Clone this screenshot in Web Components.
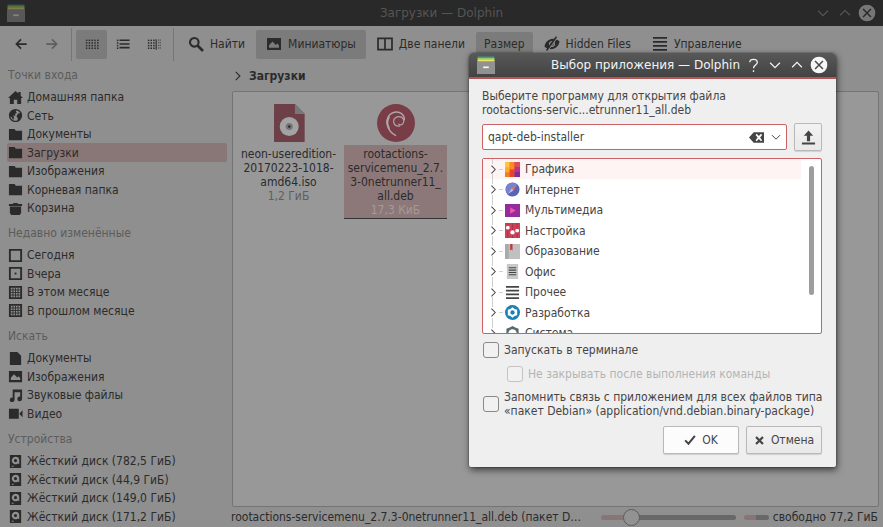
<!DOCTYPE html>
<html lang="ru">
<head>
<meta charset="utf-8">
<title>Загрузки — Dolphin</title>
<style>
html,body{margin:0;height:100%;overflow:hidden}
body{font:12px/14px "DejaVu Sans Condensed","DejaVu Sans",sans-serif;color:#2b2b2b;background:#8f8f8f}
</style>
</head>
<body>
<file-manager></file-manager>

<template id="manager">
<style>
:host{display:grid;grid-template-rows:auto auto minmax(0,1fr);height:100%;position:relative;overflow:hidden}
.body{display:grid;grid-template-columns:232px minmax(0,1fr);min-height:0}
nav{display:flex;flex-direction:column;gap:7px;padding:4px 5px 0 7px;overflow:hidden}
main{display:flex;flex-direction:column;min-width:0;padding-right:4px}
.crumb{display:flex;align-items:center;gap:5px;height:27px;margin-bottom:2px;font-weight:bold}
.crumb a{color:inherit;text-decoration:none}
.view{flex:1;display:flex;align-items:flex-start;gap:4px;padding:12px 4px;border:1px solid #747474;border-radius:2px;background:#989898;min-height:0}
choose-dialog{position:absolute;right:47px;top:53px;width:367px}
</style>
<window-title heading="Загрузки — Dolphin"></window-title>
<tool-bar></tool-bar>
<div class="body">
<nav aria-label="Точки входа">
<place-group heading="Точки входа">
<place-item icon="home">Домашняя папка</place-item>
<place-item icon="globe">Сеть</place-item>
<place-item icon="folder">Документы</place-item>
<place-item icon="folder" current>Загрузки</place-item>
<place-item icon="folder">Изображения</place-item>
<place-item icon="folder">Корневая папка</place-item>
<place-item icon="trash">Корзина</place-item>
</place-group>
<place-group heading="Недавно изменённые">
<place-item icon="day">Сегодня</place-item>
<place-item icon="yesterday">Вчера</place-item>
<place-item icon="month">В этом месяце</place-item>
<place-item icon="month">В прошлом месяце</place-item>
</place-group>
<place-group heading="Искать">
<place-item icon="doc">Документы</place-item>
<place-item icon="image">Изображения</place-item>
<place-item icon="music">Звуковые файлы</place-item>
<place-item icon="video">Видео</place-item>
</place-group>
<place-group heading="Устройства">
<place-item icon="disk">Жёсткий диск (782,5 ГиБ)</place-item>
<place-item icon="disk">Жёсткий диск (44,9 ГиБ)</place-item>
<place-item icon="disk">Жёсткий диск (149,0 ГиБ)</place-item>
<place-item icon="disk">Жёсткий диск (171,2 ГиБ)</place-item>
</place-group>
</nav>
<main>
<div class="crumb"><ui-icon name="chevron" size="12"></ui-icon><a href="#downloads">Загрузки</a></div>
<div class="view">
<file-item icon="iso" size="1,2 ГиБ">neon-useredition-<br>20170223-1018-<br>amd64.iso</file-item>
<file-item icon="debian" size="17,3 КиБ" selected>rootactions-<br>servicemenu_2.7.<br>3-0netrunner11_<br>all.deb</file-item>
</div>
<status-line></status-line>
</main>
</div>
<choose-dialog></choose-dialog>
</template>

<template id="title">
<style>
:host{display:grid;grid-template-columns:1fr auto 1fr;align-items:center;height:26px;padding:0 7px;background:#292929;color:#555;font-family:"DejaVu Sans",sans-serif}
:host([dialog]){grid-template-columns:auto 1fr auto;column-gap:4px;height:24px;border-bottom:2px solid #b75456;padding:0 8px;background:linear-gradient(#585858,#434343);color:#f4f4f4;border-radius:4px 4px 0 0}
:host([dialog]) .t{text-align:right}
.app{display:flex;opacity:.45}
:host([dialog]) .app{opacity:1}
.c{display:flex;justify-content:flex-end;gap:4px}
button{all:unset;display:flex;width:18px;height:18px;align-items:center;justify-content:center}
.q{display:none}
:host([dialog]) .q{display:flex}
.x{color:#777;--hole:#292929}
:host([dialog]) .x{color:#f6f6f6;--hole:#484848}
</style>
<span class="app"><ui-icon name="cabinet" size="18"></ui-icon></span>
<span class="t"></span>
<span class="c">
<button class="q" aria-label="Справка"><ui-icon name="help" size="15"></ui-icon></button>
<button aria-label="Свернуть"><ui-icon name="down" size="12"></ui-icon></button>
<button aria-label="Развернуть"><ui-icon name="up" size="12"></ui-icon></button>
<button class="x" aria-label="Закрыть"><ui-icon name="close" size="18"></ui-icon></button>
</span>
</template>

<template id="toolbar">
<style>
:host{display:flex;align-items:center;height:36px;padding:0 5px;box-sizing:border-box}
i{width:1px;height:33px;margin:0 4px;background:#767676}
.off{color:#5e5e5e}
.words{display:flex;align-items:center;gap:1px}
</style>
<tool-button icon="back" label="Назад"></tool-button>
<tool-button icon="forward" label="Вперёд" class="off"></tool-button>
<i></i>
<tool-button icon="grid" label="Значки" pressed></tool-button>
<tool-button icon="list" label="Список"></tool-button>
<tool-button icon="columns" label="Столбцы"></tool-button>
<i></i>
<div class="words">
<tool-button icon="search">Найти</tool-button>
<tool-button icon="image" pressed>Миниатюры</tool-button>
<tool-button icon="split">Две панели</tool-button>
<tool-button pressed>Размер</tool-button>
<tool-button icon="eye">Hidden Files</tool-button>
<tool-button icon="menu">Управление</tool-button>
</div>
</template>

<template id="toolbutton">
<style>
:host{display:block;flex:none}
button{all:unset;box-sizing:border-box;display:flex;align-items:center;justify-content:center;gap:6px;height:29px;min-width:31px;padding:0 10px;border-radius:2px;white-space:nowrap}
button.bare{padding:0}
button.text{padding:0 8px;height:24px}
:host([pressed]) button{background:#7b7b7b}
</style>
<button><slot></slot></button>
</template>

<template id="group">
<style>
:host{display:block}
h2{margin:0 0 4px 1px;font-size:12px;line-height:18px;font-weight:normal;color:#5c5c5c}
</style>
<h2></h2><div><slot></slot></div>
</template>

<template id="place">
<style>
:host{display:block;height:18px}
:host(:nth-child(even)){height:19px}
a{display:flex;align-items:center;gap:4px;height:100%;padding-left:1px;border-radius:2px;color:inherit;text-decoration:none;white-space:nowrap}
:host([current]) a{background:#897777}
</style>
<a href="#place"><ui-icon size="15"></ui-icon><span><slot></slot></span></a>
</template>

<template id="file">
<style>
:host{display:flex;flex-direction:column;align-items:center;gap:3px;width:103px;text-align:center}
.n{align-self:stretch;padding:2px 0 1px;line-height:14px}
small{display:block;font-size:12px;color:#5f5f5f}
:host([selected]) .n{background:#8c7878;border-bottom:1px solid #333}
:host([selected]) small{color:#a69999}
</style>
<ui-icon size="38"></ui-icon><div class="n"><slot></slot><small></small></div>
</template>

<template id="status">
<style>
:host{display:flex;align-items:center;gap:8px;height:20px;margin:0 -4px 0 -1px;padding-right:5px;white-space:nowrap}
.s{flex:1;min-width:0}
input{appearance:none;flex:none;width:135px;height:18px;margin:0;background:none}
input::-webkit-slider-runnable-track{height:5px;border-radius:3px;background:linear-gradient(90deg,#897575 22%,#686868 22%)}
input::-webkit-slider-thumb{appearance:none;box-sizing:border-box;width:17px;height:17px;margin-top:-6px;border:1px solid #5c5c5c;border-radius:50%;background:#929292}
.u{flex:none;width:25px;height:5px;border-radius:3px;background:linear-gradient(90deg,#897575 50%,#686868 50%);margin-right:-4px}
</style>
<span class="s">rootactions-servicemenu_2.7.3-0netrunner11_all.deb (пакет D…</span>
<input type="range" min="0" max="100" value="19" aria-label="Размер значков">
<span class="u" role="img" aria-label="Занято на диске"></span>
<span>свободно 77,2 ГиБ</span>
</template>

<template id="dialog">
<style>
:host{display:block;border-radius:4px 4px 2px 2px;background:#efefef;color:#454545;box-shadow:1px 3px 7px #0009,0 0 2px #0008}
form{padding:10px 14px 13px 13px}
.ask{display:block;margin:0 0 6px;white-space:normal}
.row{display:flex;gap:7px;align-items:center}
.combo{flex:1;min-width:0;display:flex;align-items:center;box-sizing:border-box;height:26px;padding-left:5px;border:1px solid #cc6265;border-radius:2px;background:#fff}
input[type=text]{flex:1;min-width:0;border:0;outline:0;padding:0;background:none;color:inherit;font:inherit}
button{font:inherit;color:inherit}
.combo button{all:unset;display:flex;width:20px;justify-content:center}
.btn{display:flex;align-items:center;justify-content:center;gap:6px;box-sizing:border-box;width:76px;height:28px;padding:0;border:1px solid #b9b9b9;border-radius:2px;background:linear-gradient(#f2f2f2,#e9e9e9);box-shadow:0 1px 1px #0002}
.sq{width:28px}
.ok{background:#fcfcfc}
app-tree{margin:7px 0 8px}
.tick{display:flex;align-items:center;gap:5px;padding-left:1px;white-space:nowrap}
.sub{margin:8px 0 8px 24px;color:#b4b4b4}
input[type=checkbox]{appearance:none;box-sizing:border-box;flex:none;width:16px;height:16px;margin:0;border:1px solid #898989;border-radius:3px;background:#f1f1f1}
input:disabled{border-color:#c3c3c3}
.end{justify-content:flex-end;margin-top:8px}
</style>
<window-title dialog heading="Выбор приложения — Dolphin"></window-title>
<form onsubmit="return false">
<label class="ask" for="cmd">Выберите программу для открытия файла<br>rootactions-servic...etrunner11_all.deb</label>
<div class="row">
<div class="combo"><input id="cmd" type="text" value="qapt-deb-installer"><button type="button" aria-label="Очистить"><ui-icon name="clear" size="15"></ui-icon></button><button type="button" aria-label="Показать список"><ui-icon name="down" size="10"></ui-icon></button></div>
<button type="button" class="btn sq" aria-label="Обзор"><ui-icon name="upload" size="15"></ui-icon></button>
</div>
<app-tree></app-tree>
<label class="tick"><input type="checkbox">Запускать в терминале</label>
<label class="tick sub"><input type="checkbox" disabled>Не закрывать после выполнения команды</label>
<label class="tick"><input type="checkbox"><span>Запомнить связь с приложением для всех файлов типа<br>«пакет Debian» (application/vnd.debian.binary-package)</span></label>
<div class="row end"><button class="btn ok"><ui-icon name="check" size="12"></ui-icon>OK</button><button type="button" class="btn"><ui-icon name="cross" size="11"></ui-icon>Отмена</button></div>
</form>
</template>

<template id="tree">
<style>
:host{display:flex;height:174px;overflow:hidden;border:1px solid #cc6265;border-radius:2px;background:#fff}
ul{flex:1;margin:0;padding:0;list-style:none}
li{display:flex;align-items:center;height:20px;padding-left:5px}
li:nth-child(even){height:21px}
li:first-child{background:#fef4f3}
li>span{margin-left:5px}
.tw{align-self:stretch;display:flex;align-items:center;width:17px;background:linear-gradient(#cfcfcf,#cfcfcf) 4px 0/1px 5px no-repeat,linear-gradient(#cfcfcf,#cfcfcf) 4px 100%/1px 5px no-repeat,linear-gradient(#cfcfcf,#cfcfcf) 11px 50%/4px 1px no-repeat}
.bar{flex:none;width:20px;padding:7px 0 0 8px;box-sizing:border-box}
.bar b{display:block;width:5px;height:129px;border-radius:3px;background:#9d9d9d}
</style>
<ul></ul><div class="bar"><b></b></div>
</template>

<script>
// Line and fill drawings, each on a 16-unit square.
const dots=(xs,ys,s)=>xs.map(x=>ys.map(y=>`<rect x="${x}" y="${y}" width="${s}" height="${s}" fill="currentColor"/>`).join('')).join('');
const line=(d,w=1.3)=>`<path d="${d}" fill="none" stroke="currentColor" stroke-width="${w}"/>`;
const fill=d=>`<path d="${d}" fill="currentColor" fill-rule="evenodd"/>`;
const ICONS={
back:line('M14.5 8H3.5M8 2.8 2.8 8 8 13.2',2),
forward:line('M1.5 8H12.5M8 2.8 13.2 8 8 13.2',2),
grid:dots([1,4.2,7.4,10.6,13.8],[3,6,9,12],1.7),
list:dots([1],[3,6,9,12],1.7)+fill('M4 2.800h11.500v1.900H4zM4 7h11.500v1.900H4zM4 11.200h11.500v1.900H4z'),
columns:dots([1,4,7],[3,6,9,12],1.7)+fill('M9.8 2.5h1.3v12H9.8z')+dots([12.8,14.6],[3,6,9,12],1.1),
search:'<circle cx="6.3" cy="6.3" r="4.3" fill="none" stroke="currentColor" stroke-width="2.1"/>'+line('M9.5 9.5 15 15',2.6),
image:fill('M1 2h14v12H1zM3 11.8h10V9.5L11.2 7.6 9.8 9 6.5 5.6 3 9.2z'),
split:line('M1 2.3h14v11.4H1zM8 2.3v11.4',1.7),
eye:'<g transform="rotate(-18 8 8)">'+fill('M0 8C2 4.400 4.800 3 8 3s6 1.400 8 5c-2 3.600-4.800 5-8 5S2 11.600 0 8zM8 5a3 3 0 1 0 0 6 3 3 0 1 0 0-6z')+'</g><circle cx="8" cy="8" r="1.8" fill="currentColor"/><path d="M3.5 15 13.5 1.2" stroke="#8f8f8f" stroke-width="1.2"/><path d="M2.5 14.5 12.5 .7" stroke="currentColor" stroke-width="1.5"/>',
menu:fill('M1 1h14v1.800H1zM1 5h14v1.800H1zM1 9h14v1.800H1zM1 13h14v1.800H1z'),
home:fill('M8 1 11 3.800V2h2.500v4L16 8.500h-2V15H9.800v-4.500H6.200V15H2V8.500H0z'),
globe:'<circle cx="8" cy="8" r="6.3" fill="none" stroke="currentColor" stroke-width="1.5"/>'+fill('M2 5.500 5 2.300 9 2 8.300 4 9.500 5 7.500 6.500 8 8.200 5.500 8 6.500 10 5.500 13 4.500 10.500 2 8.500zM10.500 6 14 5l.3 4-2.500 4-1.800.5.5-2.500-1.500-2z'),
folder:fill('M1 2h6l1.300 2H15v10H1z'),
trash:fill('M1 3.300H5L6 2h4l1 1.300h4v1.900H1zM2 5.900h12v7L12.500 15h-9L2 12.900z'),
day:line('M2 2h12v12H2z',2),
yesterday:line('M2 2h12v12H2z',2)+fill('M7 7h2v2H7z'),
month:line('M2 2h12v12H2z',2)+line('M3 5.300h10M3 8h10M3 10.700h10M5.300 3v10M8 3v10M10.700 3v10',.9),
doc:fill('M2 1h8l4 4v10H2z'),
music:fill('M5 1.500h10v10a2.500 2.500 0 1 1-2-2.400V4.500H7v8a2.500 2.500 0 1 1-2-2.400z'),
video:fill('M1 3h10.500v10.500H1zM12 8.200 15.500 4.500v7.500z'),
disk:fill('M2 1h12v14H2zM8 3a4 4 0 1 0 2.500 7.100L12 11V7a4 4 0 0 0-4-4zM8 5.300a1.700 1.700 0 1 1 0 3.400 1.700 1.700 0 1 1 0-3.400zM4 12.500v1h2v-1z'),
chevron:line('M5 2.500 10.500 8 5 13.500',1.5),
down:line('M1.500 5 8 11.500 14.500 5',1.6),
up:line('M1.500 11 8 4.500 14.500 11',1.6),
help:line('M4 4.500C4.300 .5 12 .5 12 4.700 12 7.500 8 7.500 8 11M8 13v2',1.4),
close:'<circle cx="8" cy="8" r="7.4" fill="currentColor"/><path d="m4.500 4.500 7 7m0-7-7 7" stroke="var(--hole)" stroke-width="1.3"/>',
cabinet:'<path d="M.5.500h15V5H.500z" fill="#3d9a9e"/><path d="M.5 2h15v1.500H.500z" fill="#b9d84f"/><path d="M.5 3.500h15V5H.500z" fill="#eee45d"/><path d="M0 5h16v11H0z" fill="#919191"/><path d="M5.500 9.300h5v1.500h-5z" fill="#f5f5f5"/>',
clear:fill('M0 8 5 2.300h11v11.400H5zM7 5.200 9.200 8 7 10.800 8.200 12 10.500 9.500 12.800 12 14 10.800 11.800 8 14 5.200 12.800 4 10.500 6.500 8.200 4z'),
upload:fill('M8 .5 13 6H9.700v6H6.300V6H3zM1 13.300h14V15.500H1z'),
check:line('M1.500 8.500 6 13 14.500 2.500',2.7),
cross:line('m3 3 10 10M13 3 3 13',3.3),
iso:'<path d="M1.700 0h8.800l4.100 4.200V16H1.700z" fill="#6d3f47"/><path d="M10.500 0v4.200h4.100z" fill="#777"/><circle cx="8.1" cy="9.5" r="4" fill="#a3a3a3"/><circle cx="8.1" cy="9.5" r="1.5" fill="#777"/><circle cx="8.1" cy="9.5" r=".6" fill="#333"/>',
debian:'<circle cx="8" cy="8" r="8" fill="#793d48"/><g fill="none" stroke="#b0a4a6" stroke-linecap="round"><path d="M9.500 9.300C7 9.600 6.300 7 7.800 5.800 9.400 4.700 11.600 5.600 11.200 7.600 10.900 8.800 9.800 9 9.200 8.500" stroke-width=".5"/><path d="M11.500 6.600C11.500 4.300 9.800 3.300 8 3.400 5 3.600 3.700 6.500 4.400 9 5 11.200 6.300 12.500 7.800 13.200" stroke-width=".65"/><path d="M5 5.600C4.200 7 4.300 8.800 5 10.200" stroke-width=".8"/></g>',
graphics:'<path d="M0 0h16v16H0z" fill="#ef7e24"/><path d="M0 0h5v6H0z" fill="#ffc640"/><path d="M0 6h5v5H0z" fill="#fbac2d"/><path d="M5 0h5v8H5z" fill="#ff8828"/><path d="M5 8h5v8H5z" fill="#e8442a"/><path d="M10 0h6v5h-6z" fill="#e54759"/><path d="M10 5h6v5h-6z" fill="#bc3280"/><path d="M10 10h6v6h-6z" fill="#842a99"/>',
internet:'<circle cx="8" cy="8" r="7.5" fill="#5765b3"/><path d="M3 13A7 7 0 0 1 13 3z" fill="#7784cc"/><path d="M12.500 3.500 9 9 7 7z" fill="#ee6d65"/><path d="M3.500 12.500 9 9 7 7z" fill="#b9c0ee"/>',
multimedia:'<path d="M0 1h16v14H0z" fill="#952b9c"/><path d="M5.500 4.500 11.500 8l-6 3.500z" fill="#ee56b2"/>',
settings:'<path d="M0 0h16v16H0z" fill="#cf3f56"/><path d="M3 0v16M8 0v16M13 0v16" stroke="#a83348"/><g fill="#fff"><circle cx="3" cy="5" r="2"/><circle cx="8" cy="10" r="2.3"/><circle cx="13" cy="8" r="2"/></g>',
education:'<path d="M0 0h16v16H0z" fill="#c0c0c0"/><path d="M0 0h4v16H0z" fill="#aaa"/><path d="M5.500 0h2.500v7L6.700 5.800 5.500 7z" fill="#bd3a38"/>',
office:'<path d="M2 0h12v16H2z" fill="#c8c8c8"/><path d="M4 4h8M4 6.500h8M4 9h8M4 11.500h8" stroke="#444" stroke-width="1.2"/>',
development:'<circle cx="8" cy="8" r="8" fill="#1b80b3"/><path d="m8 2.500 2.200 1.700 2.800.9V8v2.900l-2.800.9L8 13.500l-2.200-1.700-2.800-.9V5.100l2.800-.9z" fill="#fff"/><circle cx="8" cy="8" r="2.3" fill="#1b80b3"/>',
system:'<path d="m8 0 3 1.500L14.500 3v4L16 9l-2 5-6 2-6-2-2-5 1.500-2V3L5 1.500z" fill="#566b70"/><circle cx="8" cy="8" r="4.5" fill="#fff"/>'
};
const make=(tag,id,setup)=>customElements.define(tag,class extends HTMLElement{
connectedCallback(){
if(this.shadowRoot)return;
const r=this.attachShadow({mode:'open'});
r.append(document.getElementById(id).content.cloneNode(true));
if(setup)setup(this,r);
}});

customElements.define('ui-icon',class extends HTMLElement{
static observedAttributes=['name'];
constructor(){super();this.attachShadow({mode:'open'});}
connectedCallback(){this.draw();}
attributeChangedCallback(){this.draw();}
draw(){const s=this.getAttribute('size')||16;
this.shadowRoot.innerHTML=`<style>:host{display:block;flex:none}svg{display:block}</style><svg width="${s}" height="${s}" viewBox="0 0 16 16" aria-hidden="true">${ICONS[this.getAttribute('name')]||''}</svg>`;}
});
make('window-title','title',(e,r)=>{r.querySelector('.t').textContent=e.getAttribute('heading');});
make('tool-button','toolbutton',(e,r)=>{
const b=r.querySelector('button'),n=e.getAttribute('icon'),l=e.getAttribute('label');
if(n){const i=document.createElement('ui-icon');i.setAttribute('size',l?14:16);i.setAttribute('name',n);b.prepend(i);}else b.className='text';
if(l){b.className='bare';b.setAttribute('aria-label',l);}
});
make('tool-bar','toolbar');
make('place-item','place',(e,r)=>r.querySelector('ui-icon').setAttribute('name',e.getAttribute('icon')));
make('place-group','group',(e,r)=>{r.querySelector('h2').textContent=e.getAttribute('heading');});
make('file-item','file',(e,r)=>{r.querySelector('ui-icon').setAttribute('name',e.getAttribute('icon'));r.querySelector('small').textContent=e.getAttribute('size');});
make('status-line','status');
make('app-tree','tree',(e,r)=>{
const rows=[['graphics','Графика'],['internet','Интернет'],['multimedia','Мультимедиа'],['settings','Настройка'],['education','Образование'],['office','Офис'],['menu','Прочее'],['development','Разработка'],['system','Система']];
r.querySelector('ul').innerHTML=rows.map(([i,t])=>`<li><div class="tw"><ui-icon name="chevron" size="11"></ui-icon></div><ui-icon name="${i}" size="15"></ui-icon><span>${t}</span></li>`).join('');
});
make('choose-dialog','dialog');
make('file-manager','manager');
</script>
</body>
</html>
